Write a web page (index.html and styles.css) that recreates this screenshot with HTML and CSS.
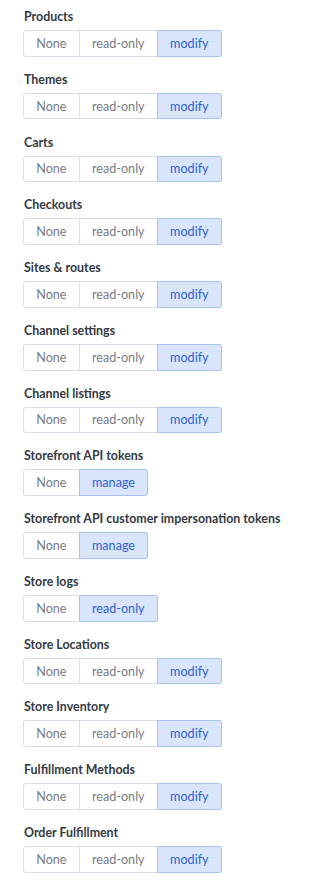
FILE: index.html
```html
<!DOCTYPE html>
<html>
<head>
<meta charset="utf-8">
<link rel="stylesheet" href="styles.css">
</head>
<body>
<div class="list">
  <div class="item"><div class="label">Products</div><div class="seg"><span class="opt">None</span><span class="opt">read-only</span><span class="opt on">modify</span></div></div>
  <div class="item"><div class="label">Themes</div><div class="seg"><span class="opt">None</span><span class="opt">read-only</span><span class="opt on">modify</span></div></div>
  <div class="item"><div class="label">Carts</div><div class="seg"><span class="opt">None</span><span class="opt">read-only</span><span class="opt on">modify</span></div></div>
  <div class="item"><div class="label">Checkouts</div><div class="seg"><span class="opt">None</span><span class="opt">read-only</span><span class="opt on">modify</span></div></div>
  <div class="item"><div class="label">Sites &amp; routes</div><div class="seg"><span class="opt">None</span><span class="opt">read-only</span><span class="opt on">modify</span></div></div>
  <div class="item"><div class="label">Channel settings</div><div class="seg"><span class="opt">None</span><span class="opt">read-only</span><span class="opt on">modify</span></div></div>
  <div class="item"><div class="label">Channel listings</div><div class="seg"><span class="opt">None</span><span class="opt">read-only</span><span class="opt on">modify</span></div></div>
  <div class="item"><div class="label">Storefront API tokens</div><div class="seg"><span class="opt">None</span><span class="opt on">manage</span></div></div>
  <div class="item"><div class="label">Storefront API customer impersonation tokens</div><div class="seg"><span class="opt">None</span><span class="opt on">manage</span></div></div>
  <div class="item"><div class="label">Store logs</div><div class="seg"><span class="opt">None</span><span class="opt on">read-only</span></div></div>
  <div class="item"><div class="label">Store Locations</div><div class="seg"><span class="opt">None</span><span class="opt">read-only</span><span class="opt on">modify</span></div></div>
  <div class="item"><div class="label">Store Inventory</div><div class="seg"><span class="opt">None</span><span class="opt">read-only</span><span class="opt on">modify</span></div></div>
  <div class="item"><div class="label">Fulfillment Methods</div><div class="seg"><span class="opt">None</span><span class="opt">read-only</span><span class="opt on">modify</span></div></div>
  <div class="item"><div class="label">Order Fulfillment</div><div class="seg"><span class="opt">None</span><span class="opt">read-only</span><span class="opt on">modify</span></div></div>
</div>
</body>
</html>
```
FILE: styles.css
```css
html, body {
  margin: 0;
  padding: 0;
  background: #ffffff;
}
body {
  font-family: Lato, "Open Sans", sans-serif;
}
.list {
  padding: 7px 0 0 23px;
  display: flex;
  flex-direction: column;
}
.item {
  height: 62.77px;
  display: flex;
  flex-direction: column;
  align-items: flex-start;
}
.label {
  font-size: 12.4px;
  font-weight: 700;
  color: #333a44;
  line-height: 20px;
  padding-left: 1px;
  margin-bottom: 3px;
}
.seg {
  display: flex;
  border: 1px solid #d9dee6;
  border-radius: 3px;
  height: 26.7px;
  box-sizing: border-box;
}
.opt {
  display: flex;
  align-items: center;
  justify-content: center;
  padding: 0 12.25px;
  font-size: 12.6px;
  color: #777c85;
  border-left: 1px solid #d9dee6;
  margin-top: -1px;
  margin-bottom: -1px;
}
.opt:first-child {
  border-left: none;
}
.opt.on {
  background: #d9e5fc;
  color: #2f5fd6;
  border: 1px solid #a8c1f3;
  margin-right: -1px;
  border-radius: 0 3px 3px 0;
}
```
